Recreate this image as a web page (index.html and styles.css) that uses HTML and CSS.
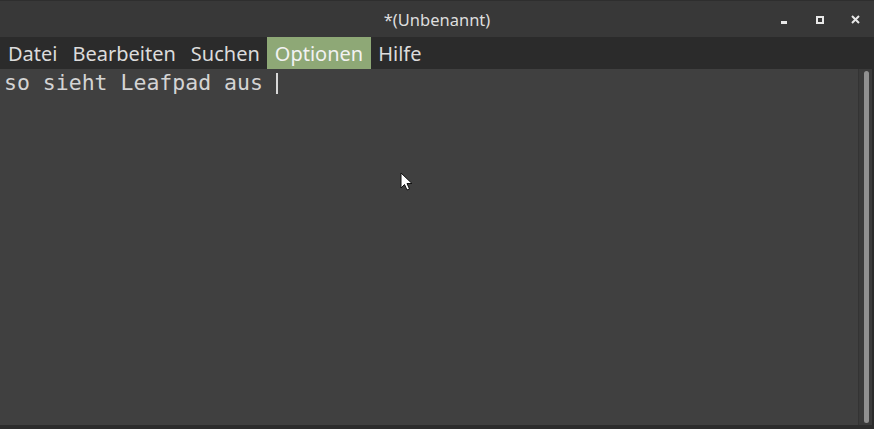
FILE: index.html
```html
<!DOCTYPE html>
<html lang="de">
<head>
<meta charset="utf-8">
<title>*(Unbenannt)</title>
<link rel="stylesheet" href="styles.css">
</head>
<body>
<div class="window">
  <header class="titlebar">
    <div class="title">*(Unbenannt)</div>
    <div class="controls">
      <span class="ctl"><span class="min"></span></span>
      <span class="ctl"><span class="max"></span></span>
      <span class="ctl">
        <svg width="9" height="9" viewBox="0 0 9 9"><path d="M1 1L8 8M8 1L1 8" stroke="#e8e8e8" stroke-width="2"/></svg>
      </span>
    </div>
  </header>
  <nav class="menubar">
    <span class="item">Datei</span>
    <span class="item">Bearbeiten</span>
    <span class="item">Suchen</span>
    <span class="item active">Optionen</span>
    <span class="item">Hilfe</span>
  </nav>
  <main class="editor">
    <div class="text">so sieht Leafpad aus <span class="caret"></span></div>
    <div class="scrollbar"><div class="thumb"></div></div>
    <svg class="pointer" width="14" height="20" viewBox="0 0 14 20"><path d="M1 1L1 16L4.5 12.5L7 18L9.5 17L7 11.5L12 11.5Z" fill="#ffffff" stroke="#111" stroke-width="1"/></svg>
  </main>
</div>
</body>
</html>
```
FILE: styles.css
```css
html, body {
  margin: 0;
  padding: 0;
  background: #2a2a2a;
}
.window {
  width: 874px;
  height: 429px;
  display: flex;
  flex-direction: column;
  overflow: hidden;
  font-family: "Noto Sans", "Open Sans", sans-serif;
}
.titlebar {
  height: 37px;
  flex: none;
  background: #383838;
  display: flex;
  align-items: center;
  justify-content: center;
  position: relative;
  box-sizing: border-box;
  border-top: 1px solid #2e2e2e;
}
.title {
  color: #dedede;
  font-size: 16.5px;
  padding-top: 1px;
}
.controls {
  position: absolute;
  right: 0;
  top: 0;
  height: 37px;
  display: flex;
  align-items: center;
}
.ctl {
  width: 36px;
  height: 20px;
  display: flex;
  align-items: center;
  justify-content: center;
}
.ctl:last-child { width: 34px; margin-right: 2px; }
.min {
  width: 6px;
  height: 3px;
  background: #e8e8e8;
  margin-top: 5px;
}
.max {
  width: 4px;
  height: 4px;
  border: 2px solid #e8e8e8;
}
.menubar {
  height: 32px;
  flex: none;
  background: #2b2b2b;
  display: flex;
  align-items: stretch;
  padding-left: 0.5px;
}
.item {
  color: #dcdcdc;
  font-size: 20px;
  padding: 1px 7.5px 0 7.5px;
  display: flex;
  align-items: center;
}
.item.active {
  background: #8ea876;
  color: #f2f2f2;
}
.editor {
  flex: 1;
  background: #404040;
  position: relative;
  display: flex;
  border-bottom: 4px solid #2c2c2c;
}
.text {
  flex: 1;
  color: #d4d4d4;
  font-family: "DejaVu Sans Mono", monospace;
  font-size: 21.5px;
  line-height: 27px;
  padding: 0 0 0 4px;
  white-space: pre;
}
.caret {
  display: inline-block;
  width: 2px;
  height: 21px;
  background: #d8d8d8;
  vertical-align: -4px;
}
.scrollbar {
  width: 16px;
  flex: none;
  background: #3a3a3a;
  border-left: 1px solid #333;
  border-right: 2px solid #2a2a2a;
  box-sizing: border-box;
  padding: 2px 3px 2px 5px;
}
.thumb {
  height: 100%;
  background: #909090;
  border-radius: 3px;
}
.pointer {
  position: absolute;
  left: 400px;
  top: 103px;
}
```
